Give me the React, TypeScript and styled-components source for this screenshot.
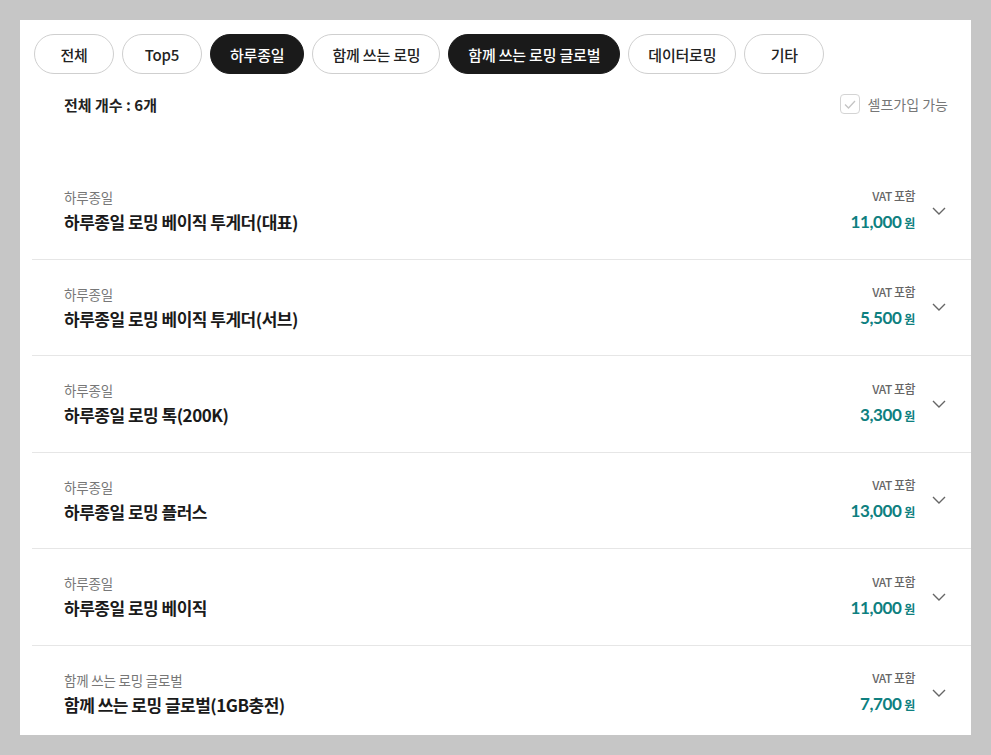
import React, { useState } from "react";
import styled, { createGlobalStyle } from "styled-components";

const GlobalStyle = createGlobalStyle`
  body {
    margin: 0;
    background-color: #c6c6c6;
    font-family: "Noto Sans CJK KR", "Noto Sans", sans-serif;
  }
`;

const Page = styled.div`
  padding: 20px;
`;

const Panel = styled.div`
  background-color: #fff;
  height: 715px;
  overflow: hidden;
  padding-top: 14px;
  box-sizing: border-box;
`;

const TabBar = styled.div`
  display: flex;
  gap: 8px;
  padding: 0 14px;
`;

const Tab = styled.button<{ $active?: boolean }>`
  height: 40px;
  min-width: 80px;
  padding: 0 19px;
  border-radius: 20px;
  border: 1px solid ${(p) => (p.$active ? "#1a1a1a" : "#cfcfcf")};
  background-color: ${(p) => (p.$active ? "#1a1a1a" : "#fff")};
  color: ${(p) => (p.$active ? "#fff" : "#222")};
  font-family: "Noto Sans CJK KR", sans-serif;
  font-size: 15px;
  font-weight: 500;
  letter-spacing: -0.2px;
  cursor: pointer;
`;

const CountRow = styled.div`
  display: flex;
  align-items: center;
  justify-content: space-between;
  margin-top: 20px;
  padding: 0 23px 0 44px;
  height: 20px;
`;

const CountText = styled.span`
  font-size: 15px;
  font-weight: 700;
  color: #222;
`;

const SelfLabel = styled.label`
  display: flex;
  align-items: center;
  gap: 8px;
  font-size: 14px;
  color: #777;
  cursor: pointer;
`;

const CheckBox = styled.span`
  width: 18px;
  height: 18px;
  border: 1px solid #d4d4d4;
  border-radius: 4px;
  display: flex;
  align-items: center;
  justify-content: center;
`;

const List = styled.ul`
  list-style: none;
  margin: 49px 0 0 12px;
  padding: 0;
`;

const Row = styled.li`
  height: 96.5px;
  box-sizing: border-box;
  border-bottom: 1px solid #e6e6e6;
  display: flex;
  align-items: center;
  padding: 0 25px 0 32px;
`;

const Info = styled.div`
  flex: 1;
  display: flex;
  flex-direction: column;
  gap: 3px;
`;

const Category = styled.span`
  font-size: 13.5px;
  color: #777;
  line-height: 20px;
  letter-spacing: -0.2px;
`;

const Title = styled.span`
  font-size: 17px;
  font-weight: 700;
  color: #1a1a1a;
  line-height: 24px;
  letter-spacing: -0.5px;
`;

const PriceBox = styled.div`
  display: flex;
  flex-direction: column;
  align-items: flex-end;
  gap: 5px;
  margin-right: 17px;
`;

const Vat = styled.span`
  font-size: 12px;
  font-weight: 500;
  color: #666;
  line-height: 18px;
  letter-spacing: -0.5px;
`;

const Price = styled.span`
  font-family: "Lato", "Noto Sans CJK KR", sans-serif;
  font-size: 17px;
  font-weight: 700;
  color: #0e8080;
  line-height: 24px;
  letter-spacing: -0.4px;
`;

const Won = styled.span`
  font-family: "Noto Sans CJK KR", sans-serif;
  font-size: 12px;
  margin-left: 3px;
`;

const Chevron = () => (
  <svg width="14" height="8" viewBox="0 0 14 8" fill="none">
    <path d="M1 1l6 6 6-6" stroke="#666" strokeWidth="1.4" />
  </svg>
);

const tabs = ["전체", "Top5", "하루종일", "함께 쓰는 로밍", "함께 쓰는 로밍 글로벌", "데이터로밍", "기타"];

const items = [
  { cat: "하루종일", name: "하루종일 로밍 베이직 투게더(대표)", price: "11,000" },
  { cat: "하루종일", name: "하루종일 로밍 베이직 투게더(서브)", price: "5,500" },
  { cat: "하루종일", name: "하루종일 로밍 톡(200K)", price: "3,300" },
  { cat: "하루종일", name: "하루종일 로밍 플러스", price: "13,000" },
  { cat: "하루종일", name: "하루종일 로밍 베이직", price: "11,000" },
  { cat: "함께 쓰는 로밍 글로벌", name: "함께 쓰는 로밍 글로벌(1GB충전)", price: "7,700" },
];

const App: React.FC = () => {
  const [active, setActive] = useState<string[]>(["하루종일", "함께 쓰는 로밍 글로벌"]);

  const toggle = (t: string) => {
    setActive((prev) => (prev.includes(t) ? prev.filter((x) => x !== t) : [...prev, t]));
  };

  return (
    <Page>
      <GlobalStyle />
      <Panel>
        <TabBar>
          {tabs.map((t) => (
            <Tab key={t} $active={active.includes(t)} onClick={() => toggle(t)}>
              {t}
            </Tab>
          ))}
        </TabBar>
        <CountRow>
          <CountText>전체 개수 : 6개</CountText>
          <SelfLabel>
            <CheckBox>
              <svg width="12" height="9" viewBox="0 0 12 9" fill="none">
                <path d="M1 4.5l3.5 3.5L11 1" stroke="#c4c4c4" strokeWidth="1.3" />
              </svg>
            </CheckBox>
            셀프가입 가능
          </SelfLabel>
        </CountRow>
        <List>
          {items.map((it, i) => (
            <Row key={i}>
              <Info>
                <Category>{it.cat}</Category>
                <Title>{it.name}</Title>
              </Info>
              <PriceBox>
                <Vat>VAT 포함</Vat>
                <Price>
                  {it.price}
                  <Won>원</Won>
                </Price>
              </PriceBox>
              <Chevron />
            </Row>
          ))}
        </List>
      </Panel>
    </Page>
  );
};

export default App;
